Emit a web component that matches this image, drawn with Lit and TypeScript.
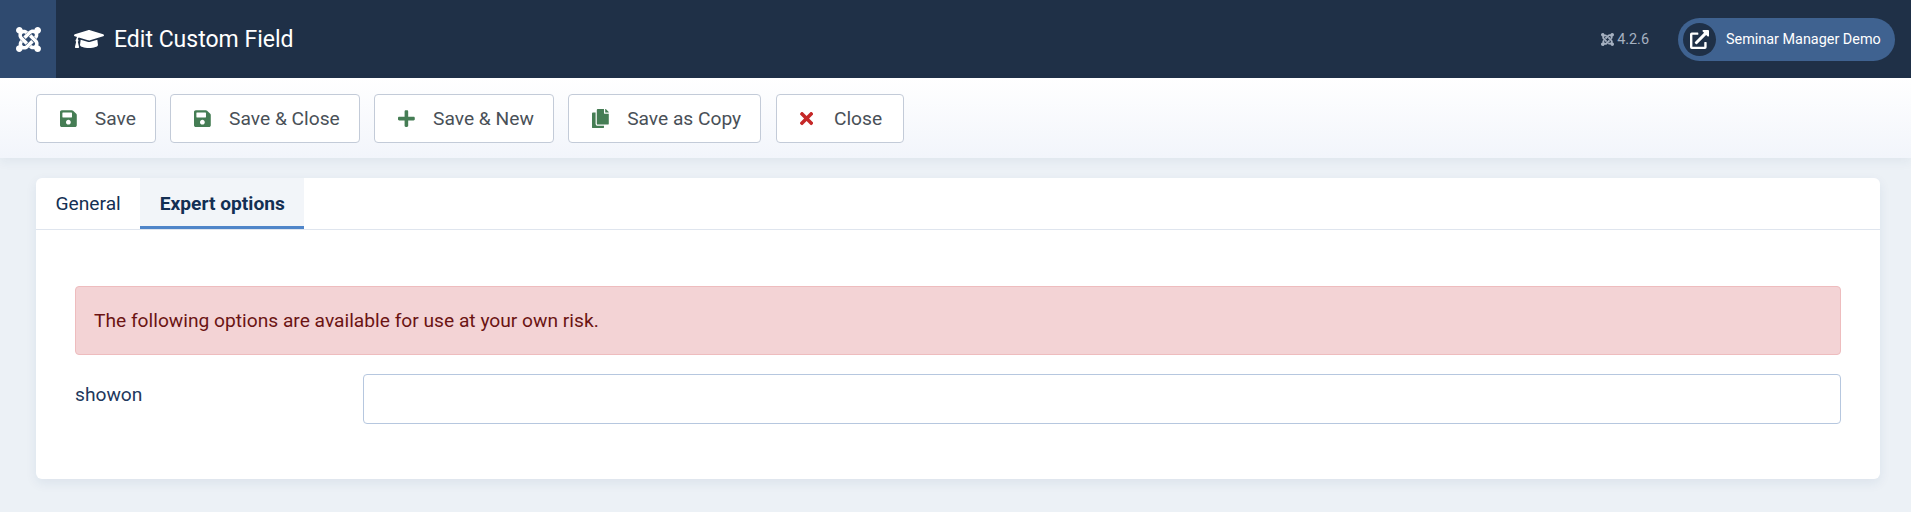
import { LitElement, html, css, svg } from "lit";
import { customElement } from "lit/decorators.js";

const JOOMLA_PIECE = "M.6 92.1C.6 58.8 27.4 32 60.4 32c30 0 54.5 21.9 59.2 50.2 32.6-7.6 67.1.6 96.5 30l-44.3 44.3c-20.5-20.5-42.6-16.3-55.4-3.5-14.3 14.3-14.3 37.9 0 52.2l99.5 99.5-44 44.3c-87.7-87.2-49.7-49.7-99.8-99.7-26.8-26.5-35-64.8-24.8-98.9C20.4 144.6.6 120.7.6 92.1z";
const joomla = (cls: string) => html`<svg class=${cls} viewBox="0 32 448 448" fill="currentColor">
  ${[0, 90, 180, 270].map((a) => svg`<path d=${JOOMLA_PIECE} transform="rotate(${a} 224 256)"></path>`)}
</svg>`;

const SAVE = "M433.941 129.941l-83.882-83.882A48 48 0 0 0 316.118 32H48C21.49 32 0 53.49 0 80v352c0 26.51 21.49 48 48 48h352c26.51 0 48-21.49 48-48V163.882a48 48 0 0 0-14.059-33.941zM224 416c-35.346 0-64-28.654-64-64 0-35.346 28.654-64 64-64s64 28.654 64 64c0 35.346-28.654 64-64 64zm96-304.52V212c0 6.627-5.373 12-12 12H76c-6.627 0-12-5.373-12-12V108c0-6.627 5.373-12 12-12h228.52c3.183 0 6.235 1.264 8.485 3.515l3.48 3.48A11.996 11.996 0 0 1 320 111.48z";
const PLUS = "M416 208H272V64c0-17.67-14.33-32-32-32h-32c-17.67 0-32 14.33-32 32v144H32c-17.67 0-32 14.33-32 32v32c0 17.67 14.33 32 32 32h144v144c0 17.67 14.33 32 32 32h32c17.67 0 32-14.33 32-32V304h144c17.67 0 32-14.33 32-32v-32c0-17.67-14.33-32-32-32z";
const COPY = "M320 448v40c0 13.255-10.745 24-24 24H24c-13.255 0-24-10.745-24-24V120c0-13.255 10.745-24 24-24h72v296c0 30.879 25.121 56 56 56h168zm0-344V0H152c-13.255 0-24 10.745-24 24v368c0 13.255 10.745 24 24 24h272c13.255 0 24-10.745 24-24V128H344c-13.2 0-24-10.8-24-24zm120.971-31.029L375.029 7.029A24 24 0 0 0 358.059 0H352v96h96v-6.059a24 24 0 0 0-7.029-16.97z";
const TIMES = "M242.72 256l100.07-100.07c12.28-12.28 12.28-32.19 0-44.48l-22.24-22.24c-12.28-12.28-32.19-12.28-44.48 0L176 189.28 75.93 89.21c-12.28-12.28-32.19-12.28-44.48 0L9.21 111.45c-12.28 12.28-12.28 32.19 0 44.48L109.28 256 9.21 356.07c-12.28 12.28-12.28 32.19 0 44.48l22.24 22.24c12.28 12.28 32.2 12.28 44.48 0L176 322.72l100.07 100.07c12.28 12.28 32.2 12.28 44.48 0l22.24-22.24c12.28-12.28 12.28-32.19 0-44.48L242.72 256z";
const CAP = "M622.34 153.2L343.4 67.5c-15.2-4.67-31.6-4.67-46.79 0L17.66 153.2c-23.54 7.23-23.54 38.36 0 45.59l48.63 14.94c-10.67 13.19-17.23 29.28-17.88 46.9C38.78 266.15 32 276.11 32 288c0 10.78 5.68 19.85 13.86 25.65L20.33 428.53C18.11 438.52 25.71 448 35.94 448h56.11c10.24 0 17.84-9.48 15.62-19.47L82.14 313.65C90.32 307.85 96 298.78 96 288c0-11.57-6.47-21.25-15.66-26.87.76-15.02 8.44-28.3 20.69-36.72L296.6 284.5c9.06 2.78 26.44 6.25 46.79 0l278.95-85.7c23.55-7.24 23.55-38.36 0-45.6zM352.79 315.09c-28.53 8.76-52.84 3.92-65.59 0l-145.02-44.55L128 384c0 35.35 85.96 64 192 64s192-28.65 192-64l-14.18-113.47-145.03 44.56z";
const EXT = "M432,320H400a16,16,0,0,0-16,16V448H64V128H208a16,16,0,0,0,16-16V80a16,16,0,0,0-16-16H48A48,48,0,0,0,0,112V464a48,48,0,0,0,48,48H400a48,48,0,0,0,48-48V336A16,16,0,0,0,432,320ZM488,0h-128c-21.37,0-32.05,25.91-17,41l35.73,35.73L135,320.37a24,24,0,0,0,0,34L157.67,377a24,24,0,0,0,34,0L435.28,133.32,471,169c15,15,41,4.5,41-17V24A24,24,0,0,0,488,0Z";

const BUTTONS = [
  { label: "Save", d: SAVE, w: 448, cls: "green", btn: "btn" },
  { label: "Save & Close", d: SAVE, w: 448, cls: "green", btn: "btn" },
  { label: "Save & New", d: PLUS, w: 448, cls: "green", btn: "btn" },
  { label: "Save as Copy", d: COPY, w: 448, cls: "green", btn: "btn" },
  { label: "Close", d: TIMES, w: 352, cls: "red", btn: "btn close" },
];

@customElement("app-root")
export class AppRoot extends LitElement {
  static styles = css`
    :host {
      display: block;
      min-height: 512px;
      background: #ecf1f6;
      font-family: Roboto, "Liberation Sans", sans-serif;
      color: #132f53;
    }
    .header {
      height: 78px;
      display: flex;
      align-items: center;
      background: #1f3047;
      color: #fff;
    }
    .logo {
      width: 56px;
      height: 100%;
      background: #2f4a6f;
      display: flex;
      align-items: center;
      justify-content: center;
      flex: none;
    }
    .logo-icon { width: 25px; height: 25px; color: #fff; }
    .title {
      display: flex;
      align-items: center;
      gap: 10px;
      margin-left: 18px;
      font-size: 23px;
      flex: 1;
    }
    .cap { width: 30px; height: 24px; fill: #fff; }
    .version {
      display: flex;
      align-items: center;
      gap: 3px;
      font-size: 14.4px;
      color: #a6b1c1;
      margin-right: 29px;
    }
    .mini { width: 13px; height: 13px; color: #a6b1c1; }
    .pill {
      display: flex;
      align-items: center;
      width: 217px;
      height: 43px;
      box-sizing: border-box;
      padding-left: 5px;
      margin-right: 16px;
      border-radius: 22px;
      background: #3f6290;
      font-size: 14.4px;
      flex: none;
    }
    .circle {
      width: 33px;
      height: 33px;
      border-radius: 50%;
      background: #1f3047;
      display: flex;
      align-items: center;
      justify-content: center;
      margin-right: 10px;
    }
    .ext { width: 19px; height: 19px; fill: #fff; }
    .toolbar {
      height: 80px;
      box-sizing: border-box;
      padding: 16px 36px;
      display: flex;
      gap: 14.5px;
      background: linear-gradient(#fff, #f2f5fb);
      box-shadow: 0 4px 10px rgba(30, 60, 110, 0.06);
    }
    .btn {
      height: 49px;
      box-sizing: border-box;
      padding: 0 19px 0 23px;
      display: flex;
      align-items: center;
      gap: 18px;
      background: #fff;
      border: 1px solid #c3cbd8;
      border-radius: 4px;
      color: #495057;
      font-size: 19.2px;
    }
    .btn svg { height: 19.2px; flex: none; }
    .btn.close { padding-right: 21px; }
    .btn.close svg { margin-right: 3px; }
    .green { fill: #457d54; }
    .red { fill: #c52828; }
    .main { padding: 20px 31px 0 36px; }
    .card {
      height: 301px;
      box-sizing: border-box;
      background: #fff;
      border-radius: 6px;
      box-shadow: 0 4px 12px rgba(30, 60, 110, 0.08);
      display: flex;
      flex-direction: column;
    }
    .tabs {
      display: flex;
      height: 52px;
      box-sizing: border-box;
      border-bottom: 1px solid #dfe5ee;
      flex: none;
    }
    .tab {
      display: flex;
      align-items: center;
      padding: 0 19.5px;
      font-size: 19.2px;
      box-sizing: border-box;
      height: 51px;
    }
    .tab.active {
      font-weight: 700;
      background: #f2f5f9;
      border-bottom: 3px solid #4f85c9;
      padding-top: 3px;
    }
    .pane { padding: 56px 39px 0; }
    .alert {
      height: 69px;
      box-sizing: border-box;
      display: flex;
      align-items: center;
      padding: 0 18px;
      background: #f3d3d5;
      border: 1px solid #eebcbe;
      border-radius: 4px;
      color: #6b1313;
      font-size: 19.2px;
    }
    .row {
      display: grid;
      grid-template-columns: 288px 1fr;
      margin-top: 19px;
    }
    .label { font-size: 19.2px; color: #22385d; padding-top: 9px; }
    .input {
      height: 50px;
      box-sizing: border-box;
      border: 1px solid #b6c7df;
      border-radius: 4px;
      background: #fff;
    }
  `;

  render() {
    return html`
      <div class="header">
        <div class="logo">${joomla("logo-icon")}</div>
        <div class="title">
          <svg class="cap" viewBox="0 0 640 512"><path d=${CAP}></path></svg>
          <span>Edit Custom Field</span>
        </div>
        <div class="version">${joomla("mini")}<span>4.2.6</span></div>
        <div class="pill">
          <div class="circle"><svg class="ext" viewBox="0 0 512 512"><path d=${EXT}></path></svg></div>
          <span>Seminar Manager Demo</span>
        </div>
      </div>
      <div class="toolbar">
        ${BUTTONS.map(
          (b) => html`<div class=${b.btn}>
            <svg class=${b.cls} viewBox="0 0 ${b.w} 512"><path d=${b.d}></path></svg>
            <span>${b.label}</span>
          </div>`
        )}
      </div>
      <div class="main">
        <div class="card">
          <div class="tabs">
            <div class="tab">General</div>
            <div class="tab active">Expert options</div>
          </div>
          <div class="pane">
            <div class="alert">The following options are available for use at your own risk.</div>
            <div class="row">
              <div class="label">showon</div>
              <div class="input"></div>
            </div>
          </div>
        </div>
      </div>
    `;
  }
}
